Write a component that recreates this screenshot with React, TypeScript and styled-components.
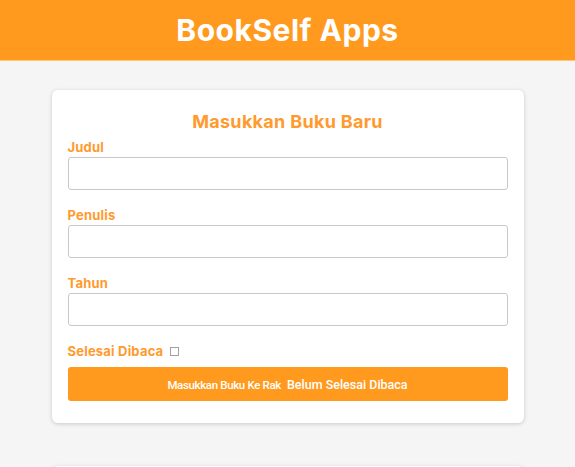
import React from "react";
import styled, { createGlobalStyle } from "styled-components";

const Global = createGlobalStyle`
  * { margin: 0; padding: 0; box-sizing: border-box; }
  body { background: #f6f5f5; font-family: Inter, "Open Sans", sans-serif; }
`;

const HeadBar = styled.header`
  height: 61px;
  background: #ff9a1f;
  border-bottom: 1px solid #ffc680;
  display: flex;
  align-items: center;
  justify-content: center;
  padding-bottom: 1px;
`;

const AppTitle = styled.h1`
  color: #fff;
  font-family: Inter, sans-serif;
  font-weight: 700;
  font-size: 30px;
  letter-spacing: 0.5px;
`;

const Main = styled.main`
  width: 472px;
  margin: 29px auto 0;
  display: flex;
  flex-direction: column;
  gap: 43px;
`;

const Card = styled.section`
  background: #fff;
  border-radius: 6px;
  box-shadow: 0 1px 4px rgba(0, 0, 0, 0.18);
  padding: 21px 16px 22px;
  display: flex;
  flex-direction: column;
`;

const CardTitle = styled.h2`
  text-align: center;
  color: #ff9a2e;
  font-family: Inter, sans-serif;
  font-weight: 700;
  font-size: 18px;
  line-height: 22px;
  letter-spacing: 0.3px;
`;

const Field = styled.div<{ $gap?: number }>`
  display: flex;
  flex-direction: column;
  margin-top: ${(p) => p.$gap ?? 0}px;
`;

const Label = styled.label`
  color: #ff9a2e;
  font-family: Inter, sans-serif;
  font-weight: 700;
  font-size: 13px;
  line-height: 16px;
  letter-spacing: 0.2px;
  margin-bottom: 2px;
`;

const Input = styled.input`
  height: 33px;
  border: 1px solid #c9c9c9;
  border-radius: 3px;
  padding: 0 8px;
  font-size: 14px;
`;

const CheckRow = styled.div`
  display: flex;
  align-items: center;
  gap: 7px;
  margin-top: 17px;
`;

const CheckLabel = styled(Label)`
  margin-bottom: 0;
`;

const Check = styled.span`
  width: 9px;
  height: 9px;
  border: 1px solid #a0a0a0;
  background: #fff;
  display: inline-block;
  margin-top: 1px;
`;

const Button = styled.button`
  margin-top: 8px;
  height: 34px;
  border: none;
  border-radius: 3px;
  background: #ff9a1f;
  color: #fff;
  font-family: Roboto, "Liberation Sans", sans-serif;
  font-weight: 500;
  display: flex;
  align-items: center;
  justify-content: center;
  gap: 6px;
  padding-top: 1px;
`;

const Small = styled.span`
  font-size: 11.5px;
  letter-spacing: -0.35px;
`;

const Big = styled.span`
  font-size: 12.5px;
  letter-spacing: 0px;
`;

const NextCard = styled.div`
  background: #fff;
  border-radius: 6px;
  box-shadow: 0 1px 4px rgba(0, 0, 0, 0.18);
  height: 60px;
`;

export default function App() {
  return (
    <>
      <Global />
      <HeadBar>
        <AppTitle>BookSelf Apps</AppTitle>
      </HeadBar>
      <Main>
        <Card>
          <CardTitle>Masukkan Buku Baru</CardTitle>
          <Field $gap={6}>
            <Label>Judul</Label>
            <Input type="text" />
          </Field>
          <Field $gap={17}>
            <Label>Penulis</Label>
            <Input type="text" />
          </Field>
          <Field $gap={17}>
            <Label>Tahun</Label>
            <Input type="number" />
          </Field>
          <CheckRow>
            <CheckLabel as="span">Selesai Dibaca</CheckLabel>
            <Check />
          </CheckRow>
          <Button>
            <Small>Masukkan Buku Ke Rak</Small>
            <Big>Belum Selesai Dibaca</Big>
          </Button>
        </Card>
        <NextCard />
      </Main>
    </>
  );
}
